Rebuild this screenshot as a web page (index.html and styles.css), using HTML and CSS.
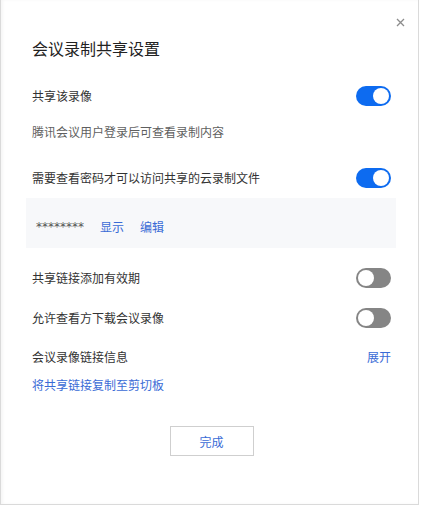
FILE: index.html
```html
<!DOCTYPE html>
<html lang="zh">
<head>
<meta charset="utf-8">
<title>会议录制共享设置</title>
<link rel="stylesheet" href="styles.css">
</head>
<body>
<div class="dialog">
  <button class="close" aria-label="关闭">
    <svg width="9" height="9" viewBox="0 0 9 9"><path d="M1 1L8 8M8 1L1 8" stroke="#8c8c8c" stroke-width="1.3" fill="none"/></svg>
  </button>
  <h1 class="title">会议录制共享设置</h1>

  <div class="row row-1">
    <span class="label">共享该录像</span>
    <span class="toggle on"><span class="knob"></span></span>
  </div>
  <p class="desc">腾讯会议用户登录后可查看录制内容</p>

  <div class="row row-2">
    <span class="label">需要查看密码才可以访问共享的云录制文件</span>
    <span class="toggle on"><span class="knob"></span></span>
  </div>
  <div class="pwd-box">
    <span class="stars">********</span>
    <a class="link">显示</a>
    <a class="link">编辑</a>
  </div>

  <div class="row row-3">
    <span class="label">共享链接添加有效期</span>
    <span class="toggle off"><span class="knob"></span></span>
  </div>
  <div class="row row-4">
    <span class="label">允许查看方下载会议录像</span>
    <span class="toggle off"><span class="knob"></span></span>
  </div>
  <div class="row row-5">
    <span class="label">会议录像链接信息</span>
    <a class="link">展开</a>
  </div>
  <a class="link copy">将共享链接复制至剪切板</a>

  <div class="footer">
    <button class="done">完成</button>
  </div>
</div>
</body>
</html>
```

FILE: styles.css
```css
html, body {
  margin: 0;
  padding: 0;
  background: #ffffff;
}
body {
  font-family: "Noto Sans CJK SC", "Noto Sans", sans-serif;
  font-size: 12px;
  color: #333333;
}
.dialog {
  position: relative;
  box-sizing: border-box;
  width: 419px;
  height: 505px;
  border: 1px solid #dadada;
  border-top: none;
  box-shadow: inset 2px 0 3px rgba(0,0,0,0.04);
  padding: 37px 27px 0 31px;
  background: #ffffff;
}
.close {
  position: absolute;
  top: 18px;
  right: 13px;
  width: 9px;
  height: 9px;
  padding: 0;
  border: none;
  background: none;
  display: flex;
}
.title {
  margin: 0;
  font-size: 16px;
  line-height: 22px;
  font-weight: 400;
  color: #222222;
}
.row {
  display: flex;
  align-items: center;
  justify-content: space-between;
  height: 20px;
  line-height: 20px;
}
.row-1 { margin-top: 27px; }
.desc {
  margin: 17px 0 0;
  line-height: 18px;
  color: #5f5f5f;
}
.row-2 { margin-top: 27px; }
.pwd-box {
  margin: 10px -5px 0 -6px;
  height: 50px;
  box-sizing: border-box;
  padding: 20px 10px 0 10px;
  background: #f7f8fa;
  display: flex;
  align-items: flex-start;
  line-height: 18px;
}
.stars {
  font-family: "DejaVu Sans", sans-serif;
  font-size: 12px;
  color: #555555;
  width: 64px;
}
.pwd-box .link { margin-right: 16px; }
.row-3 { margin-top: 20px; }
.row-4 { margin-top: 20px; }
.row-5 { margin-top: 19px; }
.link {
  color: #3a6bd6;
  cursor: pointer;
}
.copy {
  display: block;
  margin-top: 9px;
  line-height: 18px;
}
.toggle {
  position: relative;
  width: 35px;
  height: 20px;
  border-radius: 10px;
  box-sizing: border-box;
}
.toggle.on { background: #0d6bf0; }
.toggle.off { background: #858585; }
.knob {
  position: absolute;
  top: 2px;
  width: 16px;
  height: 16px;
  border-radius: 50%;
  background: #ffffff;
}
.toggle.on .knob { right: 2px; }
.toggle.off .knob { left: 2px; }
.footer {
  display: flex;
  justify-content: center;
  margin-top: 32px;
}
.done {
  width: 84px;
  height: 30px;
  border: 1px solid #cfcfcf;
  background: #ffffff;
  color: #3a6bd6;
  font-family: "Noto Sans CJK SC", sans-serif;
  font-size: 12px;
  padding: 0;
}
```
